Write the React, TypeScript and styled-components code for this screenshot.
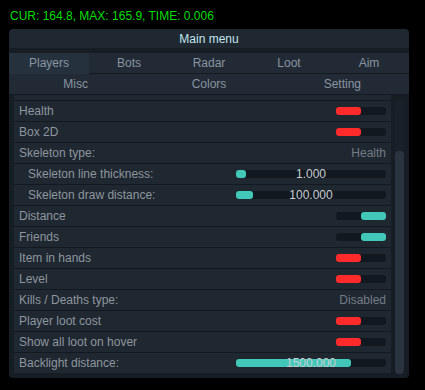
import styled, { createGlobalStyle } from 'styled-components';

const GlobalStyle = createGlobalStyle`
  html, body {
    margin: 0;
    padding: 0;
    background: #000;
  }
  body {
    font-family: "Liberation Sans", Arial, sans-serif;
    font-size: 12px;
  }
`;

const Page = styled.div`
  width: 425px;
  height: 390px;
  padding: 9px 0 0 9px;
  box-sizing: border-box;
  display: flex;
  flex-direction: column;
`;

const Status = styled.div`
  height: 14px;
  line-height: 14px;
  padding-left: 1px;
  color: #00dc00;
  font-size: 12px;
`;

const Window = styled.div`
  margin-top: 6px;
  width: 400px;
  height: 349px;
  border-radius: 4px;
  background: #171d25;
  overflow: hidden;
  display: flex;
  flex-direction: column;
`;

const TitleBar = styled.div`
  height: 19px;
  line-height: 17px;
  padding-top: 2px;
  box-sizing: border-box;
  text-align: center;
  color: #c2e6ee;
  background: #1f2731;
  border-radius: 4px 4px 0 0;
  margin-bottom: 5px;
`;

const TabRow = styled.div<{ $cols: number }>`
  display: grid;
  grid-template-columns: repeat(${(p) => p.$cols}, 1fr);
  height: 20px;
  background: #212a35;
  border-bottom: 1px solid #141a21;
`;

const Tab = styled.div<{ $active?: boolean }>`
  line-height: 21px;
  text-align: center;
  color: #8a95a1;
  background: ${(p) => (p.$active ? '#26313e' : 'transparent')};
`;

const Body = styled.div`
  flex: 1;
  display: flex;
  padding: 0 5px 4px 5px;
  gap: 4px;
  min-height: 0;
`;

const List = styled.div`
  flex: 1;
  overflow: hidden;
`;

const ListInner = styled.div`
  margin-top: -16px;
`;

const Row = styled.div<{ $indent?: boolean }>`
  height: 20px;
  border-top: 1px solid #131920;
  background: #1f2731;
  display: flex;
  align-items: center;
  justify-content: space-between;
  padding: 0 5px 0 ${(p) => (p.$indent ? 14 : 5)}px;
`;

const Label = styled.span`
  color: #8e969e;
`;

const Value = styled.span`
  color: #737c86;
`;

const ToggleTrack = styled.div<{ $on: boolean }>`
  width: 50px;
  height: 8px;
  border-radius: 3px;
  background: #121820;
  display: flex;
  justify-content: ${(p) => (p.$on ? 'flex-end' : 'flex-start')};
`;

const ToggleKnob = styled.div<{ $on: boolean }>`
  width: 25px;
  height: 8px;
  border-radius: 3px;
  background: ${(p) => (p.$on ? '#41c8b9' : '#ff2b2b')};
`;

const SliderTrack = styled.div`
  position: relative;
  width: 150px;
  height: 8px;
  border-radius: 3px;
  background: #121820;
`;

const SliderFill = styled.div`
  height: 8px;
  border-radius: 3px;
  background: #41c8b9;
`;

const SliderText = styled.span`
  position: absolute;
  left: 0;
  right: 0;
  top: -3px;
  line-height: 14px;
  text-align: center;
  color: #c9cdd1;
`;

const Scrollbar = styled.div`
  width: 9px;
  margin-top: 6px;
  border-radius: 4px;
  background: #19202a;
  display: flex;
  flex-direction: column;
  justify-content: flex-end;
`;

const Thumb = styled.div`
  height: 223px;
  border-radius: 4px;
  background: #2a3340;
`;

const Toggle = ({ on }: { on: boolean }) => (
  <ToggleTrack $on={on}>
    <ToggleKnob $on={on} />
  </ToggleTrack>
);

const Slider = ({ fill, text }: { fill: number; text: string }) => (
  <SliderTrack>
    <SliderFill style={{ width: fill }} />
    <SliderText>{text}</SliderText>
  </SliderTrack>
);

type Item =
  | { label: string; kind: 'toggle'; on: boolean }
  | { label: string; kind: 'value'; value: string }
  | { label: string; kind: 'slider'; fill: number; text: string; indent?: boolean };

const items: Item[] = [
  { label: 'Health', kind: 'toggle', on: false },
  { label: 'Box 2D', kind: 'toggle', on: false },
  { label: 'Skeleton type:', kind: 'value', value: 'Health' },
  { label: 'Skeleton line thickness:', kind: 'slider', fill: 10, text: '1.000', indent: true },
  { label: 'Skeleton draw distance:', kind: 'slider', fill: 17, text: '100.000', indent: true },
  { label: 'Distance', kind: 'toggle', on: true },
  { label: 'Friends', kind: 'toggle', on: true },
  { label: 'Item in hands', kind: 'toggle', on: false },
  { label: 'Level', kind: 'toggle', on: false },
  { label: 'Kills / Deaths type:', kind: 'value', value: 'Disabled' },
  { label: 'Player loot cost', kind: 'toggle', on: false },
  { label: 'Show all loot on hover', kind: 'toggle', on: false },
  { label: 'Backlight distance:', kind: 'slider', fill: 115, text: '1500.000' },
];

const App = () => {
  return (
    <>
      <GlobalStyle />
      <Page>
        <Status>CUR: 164.8, MAX: 165.9, TIME: 0.006</Status>
        <Window>
          <TitleBar>Main menu</TitleBar>
          <TabRow $cols={5}>
            <Tab $active>Players</Tab>
            <Tab>Bots</Tab>
            <Tab>Radar</Tab>
            <Tab>Loot</Tab>
            <Tab>Aim</Tab>
          </TabRow>
          <TabRow $cols={3}>
            <Tab>Misc</Tab>
            <Tab>Colors</Tab>
            <Tab>Setting</Tab>
          </TabRow>
          <Body>
            <List>
              <ListInner>
                <Row />
                {items.map((it) => (
                  <Row key={it.label} $indent={it.kind === 'slider' && it.indent}>
                    <Label>{it.label}</Label>
                    {it.kind === 'toggle' && <Toggle on={it.on} />}
                    {it.kind === 'value' && <Value>{it.value}</Value>}
                    {it.kind === 'slider' && <Slider fill={it.fill} text={it.text} />}
                  </Row>
                ))}
              </ListInner>
            </List>
            <Scrollbar>
              <Thumb />
            </Scrollbar>
          </Body>
        </Window>
      </Page>
    </>
  );
};

export default App;
